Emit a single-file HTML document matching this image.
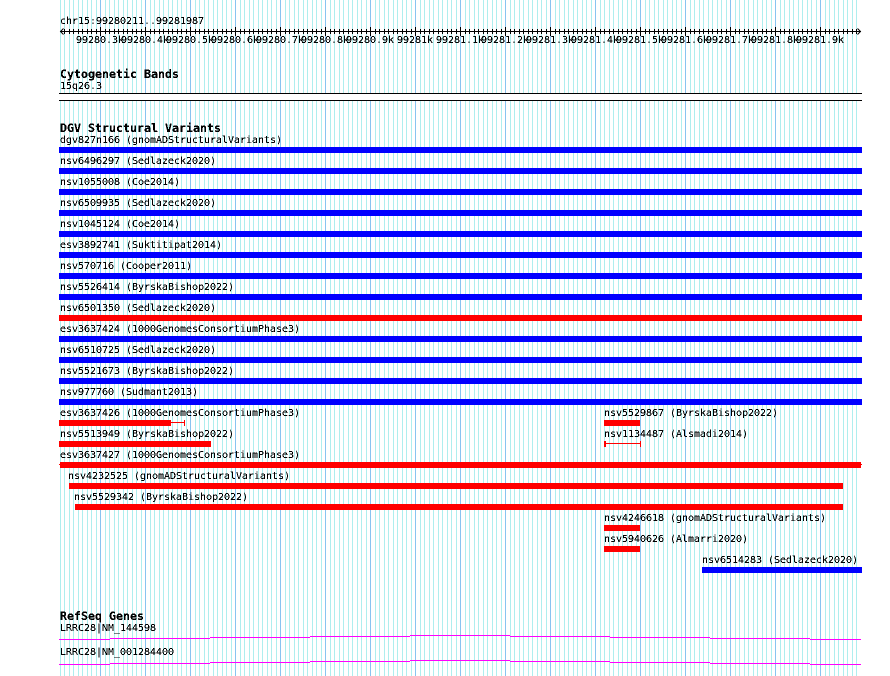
<!DOCTYPE html>
<html><head><meta charset="utf-8"><title>DGV</title>
<style>
html,body{margin:0;padding:0;background:#fff;width:890px;height:676px;overflow:hidden}
#p{position:relative;width:890px;height:676px;overflow:hidden;background:#fff}
#p div{position:absolute}
.grid{left:60px;top:0;width:798px;height:676px;background-image:linear-gradient(90deg,#aeeeee 1px,transparent 1px);background-size:9px 676px}
.grid2{left:64px;top:0;width:794px;height:676px;background-image:linear-gradient(90deg,#aeeeee 1px,transparent 1px);background-size:9px 676px}
.maj{left:60px;top:0;width:798px;height:676px;background-image:linear-gradient(90deg,#88c4f0 1px,transparent 1px);background-size:45px 676px;background-position:40px 0}
.b{background:#00f;left:59px;width:803px;height:6px}
.r{background:#f00;height:6px}
.k{background:#000}
.m{background:#f0f;height:1px}
#t{left:0;top:0;width:890px;height:676px;filter:url(#th);font:10px/10px "DejaVu Sans Mono",monospace;letter-spacing:-0.02px;color:#000;white-space:pre}
#t span{position:absolute;line-height:10px}
#t b{position:absolute;font:bold 11.63px/12px "DejaVu Sans Mono",monospace;letter-spacing:0}
</style></head><body>
<svg width="0" height="0" style="position:absolute"><filter id="th" color-interpolation-filters="sRGB" x="0" y="0" width="100%" height="100%"><feComponentTransfer><feFuncA type="discrete" tableValues="0 0 1 1 1"/></feComponentTransfer></filter></svg>
<div id="p">
<div class="grid"></div>
<div class="grid2"></div>
<div class="maj"></div>
<div style="left:59px;top:94px;width:803px;height:6px;background:#fff"></div>
<div class="k" style="left:59px;top:93px;width:803px;height:1px"></div>
<div class="k" style="left:59px;top:100px;width:803px;height:1px"></div>

<!-- axis -->
<div class="k" style="left:60px;top:31px;width:801px;height:1px"></div>
<div style="left:64px;top:29px;width:794px;height:5px;background-image:linear-gradient(90deg,#000 1px,transparent 1px);background-size:9px 5px"></div>
<div style="left:69px;top:29px;width:789px;height:5px;background-image:linear-gradient(90deg,#000 1px,transparent 1px);background-size:9px 5px"></div>
<div style="left:100px;top:27px;width:725px;height:9px;background-image:linear-gradient(90deg,#000 1px,transparent 1px);background-size:45px 9px"></div>
<svg style="position:absolute;left:58px;top:27px" width="8" height="10"><path d="M5.5 1.5L2.5 4.5L5.5 7.5" fill="none" stroke="#000"/></svg>
<svg style="position:absolute;left:856px;top:27px" width="8" height="10"><path d="M1.5 1.5L4.5 4.5L1.5 7.5" fill="none" stroke="#000"/></svg>

<!-- bars -->
<div class="b" style="top:147px"></div>
<div class="b" style="top:168px"></div>
<div class="b" style="top:189px"></div>
<div class="b" style="top:210px"></div>
<div class="b" style="top:231px"></div>
<div class="b" style="top:252px"></div>
<div class="b" style="top:273px"></div>
<div class="b" style="top:294px"></div>
<div class="r" style="top:315px;left:59px;width:803px"></div>
<div class="b" style="top:336px"></div>
<div class="b" style="top:357px"></div>
<div class="b" style="top:378px"></div>
<div class="b" style="top:399px"></div>

<div class="r" style="top:420px;left:59px;width:112px"></div>
<div class="r" style="top:422px;left:171px;width:14px;height:1px"></div>
<div class="r" style="top:420px;left:184px;width:1px"></div>
<div class="r" style="top:420px;left:604px;width:36px"></div>
<div class="r" style="top:441px;left:59px;width:152px"></div>
<div class="r" style="top:443px;left:604px;width:37px;height:1px"></div>
<div class="r" style="top:441px;left:604px;width:2px"></div>
<div class="r" style="top:441px;left:640px;width:1px"></div>
<div class="r" style="top:462px;left:60px;width:801px"></div>
<div class="r" style="top:464px;left:59px;width:803px;height:1px"></div>
<div class="r" style="top:483px;left:69px;width:774px"></div>
<div class="r" style="top:504px;left:75px;width:768px"></div>
<div class="r" style="top:525px;left:604px;width:36px"></div>
<div class="r" style="top:546px;left:604px;width:36px"></div>
<div class="b" style="top:567px;left:702px;width:160px"></div>

<!-- gene lines -->
<div class="m" style="left:59px;top:639px;width:51px"></div>
<div class="m" style="left:110px;top:638px;width:100px"></div>
<div class="m" style="left:210px;top:637px;width:100px"></div>
<div class="m" style="left:310px;top:636px;width:100px"></div>
<div class="m" style="left:410px;top:635px;width:100px"></div>
<div class="m" style="left:510px;top:636px;width:100px"></div>
<div class="m" style="left:610px;top:637px;width:100px"></div>
<div class="m" style="left:710px;top:638px;width:100px"></div>
<div class="m" style="left:810px;top:639px;width:51px"></div>
<div class="m" style="left:59px;top:664px;width:51px"></div>
<div class="m" style="left:110px;top:663px;width:100px"></div>
<div class="m" style="left:210px;top:662px;width:100px"></div>
<div class="m" style="left:310px;top:661px;width:100px"></div>
<div class="m" style="left:410px;top:660px;width:100px"></div>
<div class="m" style="left:510px;top:661px;width:100px"></div>
<div class="m" style="left:610px;top:662px;width:100px"></div>
<div class="m" style="left:710px;top:663px;width:100px"></div>
<div class="m" style="left:810px;top:664px;width:51px"></div>

<div id="t">
<span style="left:60px;top:17px">chr15:99280211..99281987</span>
<span style="left:76px;top:36px">99280.3k</span>
<span style="left:121px;top:36px">99280.4k</span>
<span style="left:166px;top:36px">99280.5k</span>
<span style="left:211px;top:36px">99280.6k</span>
<span style="left:256px;top:36px">99280.7k</span>
<span style="left:301px;top:36px">99280.8k</span>
<span style="left:346px;top:36px">99280.9k</span>
<span style="left:397px;top:36px">99281k</span>
<span style="left:436px;top:36px">99281.1k</span>
<span style="left:481px;top:36px">99281.2k</span>
<span style="left:526px;top:36px">99281.3k</span>
<span style="left:571px;top:36px">99281.4k</span>
<span style="left:616px;top:36px">99281.5k</span>
<span style="left:661px;top:36px">99281.6k</span>
<span style="left:706px;top:36px">99281.7k</span>
<span style="left:751px;top:36px">99281.8k</span>
<span style="left:796px;top:36px">99281.9k</span>
<b style="left:60px;top:68px">Cytogenetic Bands</b>
<span style="left:60px;top:82px">15q26.3</span>
<b style="left:60px;top:122px">DGV Structural Variants</b>
<span style="left:60px;top:136px">dgv827n166 (gnomADStructuralVariants)</span>
<span style="left:60px;top:157px">nsv6496297 (Sedlazeck2020)</span>
<span style="left:60px;top:178px">nsv1055008 (Coe2014)</span>
<span style="left:60px;top:199px">nsv6509935 (Sedlazeck2020)</span>
<span style="left:60px;top:220px">nsv1045124 (Coe2014)</span>
<span style="left:60px;top:241px">esv3892741 (Suktitipat2014)</span>
<span style="left:60px;top:262px">nsv570716 (Cooper2011)</span>
<span style="left:60px;top:283px">nsv5526414 (ByrskaBishop2022)</span>
<span style="left:60px;top:304px">nsv6501350 (Sedlazeck2020)</span>
<span style="left:60px;top:325px">esv3637424 (1000GenomesConsortiumPhase3)</span>
<span style="left:60px;top:346px">nsv6510725 (Sedlazeck2020)</span>
<span style="left:60px;top:367px">nsv5521673 (ByrskaBishop2022)</span>
<span style="left:60px;top:388px">nsv977760 (Sudmant2013)</span>
<span style="left:60px;top:409px">esv3637426 (1000GenomesConsortiumPhase3)</span>
<span style="left:604px;top:409px">nsv5529867 (ByrskaBishop2022)</span>
<span style="left:60px;top:430px">nsv5513949 (ByrskaBishop2022)</span>
<span style="left:604px;top:430px">nsv1134487 (Alsmadi2014)</span>
<span style="left:60px;top:451px">esv3637427 (1000GenomesConsortiumPhase3)</span>
<span style="left:68px;top:472px">nsv4232525 (gnomADStructuralVariants)</span>
<span style="left:74px;top:493px">nsv5529342 (ByrskaBishop2022)</span>
<span style="left:604px;top:514px">nsv4246618 (gnomADStructuralVariants)</span>
<span style="left:604px;top:535px">nsv5940626 (Almarri2020)</span>
<span style="left:702px;top:556px">nsv6514283 (Sedlazeck2020)</span>
<b style="left:60px;top:610px">RefSeq Genes</b>
<span style="left:60px;top:624px">LRRC28|NM_144598</span>
<span style="left:60px;top:648px">LRRC28|NM_001284400</span>
</div>
</div>
</body></html>
